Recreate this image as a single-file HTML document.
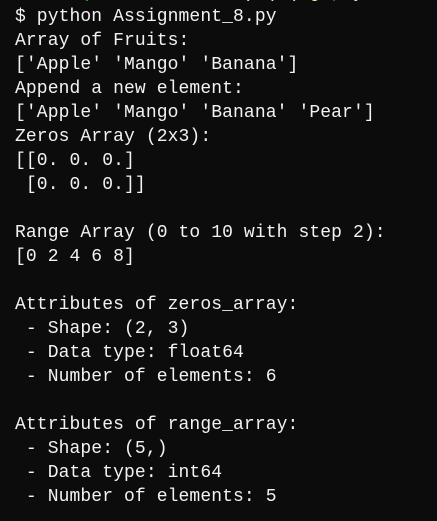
<!DOCTYPE html>
<html><head><meta charset="utf-8"><style>
html,body{margin:0;padding:0;background:#0c0c0c;width:437px;height:521px;overflow:hidden}
pre{margin:0;position:absolute;left:15px;top:5px;font-family:"Liberation Mono",monospace;font-size:18px;line-height:24px;color:#f2f2f2;letter-spacing:0.1px}
.top{position:absolute;top:-19px;left:15px;font-family:"Liberation Mono",monospace;font-size:18px;line-height:24px;margin:0}
.g{color:#16c60c}.y{color:#f9f1a5}
</style></head><body>
<pre class="top">      <span class="g">(</span>              <span class="y">) ( ( g , y</span></pre>
<pre>$ python Assignment_8.py
Array of Fruits:
['Apple' 'Mango' 'Banana']
Append a new element:
['Apple' 'Mango' 'Banana' 'Pear']
Zeros Array (2x3):
[[0. 0. 0.]
 [0. 0. 0.]]

Range Array (0 to 10 with step 2):
[0 2 4 6 8]

Attributes of zeros_array:
 - Shape: (2, 3)
 - Data type: float64
 - Number of elements: 6

Attributes of range_array:
 - Shape: (5,)
 - Data type: int64
 - Number of elements: 5</pre>
</body></html>
